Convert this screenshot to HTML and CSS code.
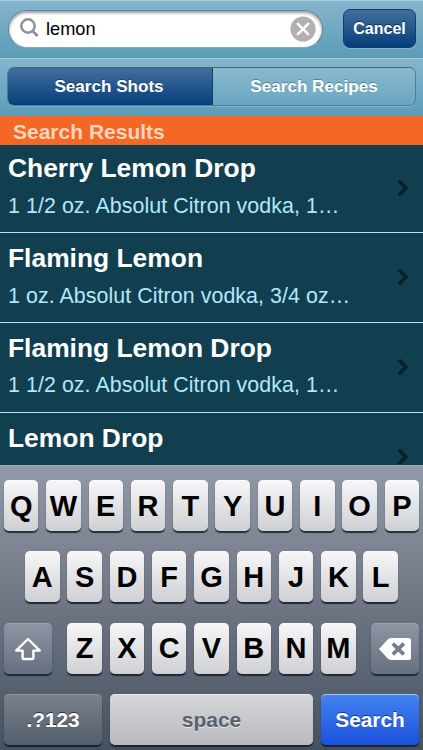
FILE: index.html
```html
<!DOCTYPE html>
<html lang="en">
<head>
    <meta charset="UTF-8">
    <title>Search Shots</title>
    <link rel="stylesheet" href="styles.css">
</head>
<body>
    <div class="search-bar">
        <div class="search-field">
            <svg class="magnifier" width="20" height="21" viewBox="0 0 20 21"><circle cx="8" cy="8" r="6.7" fill="none" stroke="#8d929b" stroke-width="2.5"/><path d="M12.6 13l5 5" stroke="#8d929b" stroke-width="3"/></svg>
            <span class="query">lemon</span>
            <svg class="clear" width="26" height="26" viewBox="0 0 26 26"><circle cx="13" cy="13" r="12.6" fill="#b1b1b1"/><path d="M7.8 7.8l10.4 10.4M18.2 7.8L7.8 18.2" stroke="#fff" stroke-width="2.5" stroke-linecap="round"/></svg>
        </div>
        <button class="cancel">Cancel</button>
    </div>

    <div class="scope-bar">
        <div class="segments">
            <button class="segment active">Search Shots</button>
            <button class="segment">Search Recipes</button>
        </div>
    </div>

    <h2 class="section-header">Search Results</h2>

    <div class="results">
        <div class="result">
            <div>
                <div class="name">Cherry Lemon Drop</div>
                <div class="ingredients">1 1/2 oz. Absolut Citron vodka, 1…</div>
            </div>
            <svg class="chevron" width="12" height="18" viewBox="0 0 12 18"><path d="M1.8 1.8L9 9l-7.2 7.2" fill="none" stroke="#07202b" stroke-width="3.6"/></svg>
        </div>
        <div class="result">
            <div>
                <div class="name">Flaming Lemon</div>
                <div class="ingredients">1 oz. Absolut Citron vodka, 3/4 oz…</div>
            </div>
            <svg class="chevron" width="12" height="18" viewBox="0 0 12 18"><path d="M1.8 1.8L9 9l-7.2 7.2" fill="none" stroke="#07202b" stroke-width="3.6"/></svg>
        </div>
        <div class="result">
            <div>
                <div class="name">Flaming Lemon Drop</div>
                <div class="ingredients">1 1/2 oz. Absolut Citron vodka, 1…</div>
            </div>
            <svg class="chevron" width="12" height="18" viewBox="0 0 12 18"><path d="M1.8 1.8L9 9l-7.2 7.2" fill="none" stroke="#07202b" stroke-width="3.6"/></svg>
        </div>
        <div class="result">
            <div>
                <div class="name">Lemon Drop</div>
            </div>
            <svg class="chevron" width="12" height="18" viewBox="0 0 12 18"><path d="M1.8 1.8L9 9l-7.2 7.2" fill="none" stroke="#07202b" stroke-width="3.6"/></svg>
        </div>
    </div>

    <div class="keyboard">
        <div class="keys">
            <div class="key">Q</div><div class="key">W</div><div class="key">E</div><div class="key">R</div><div class="key">T</div><div class="key">Y</div><div class="key">U</div><div class="key">I</div><div class="key">O</div><div class="key">P</div>
        </div>
        <div class="keys">
            <div class="key">A</div><div class="key">S</div><div class="key">D</div><div class="key">F</div><div class="key">G</div><div class="key">H</div><div class="key">J</div><div class="key">K</div><div class="key">L</div>
        </div>
        <div class="keys spread">
            <div class="key dark side">
                <svg width="28" height="24" viewBox="0 0 28 24"><path d="M14 2L2.2 13.6H8.6V20.5Q8.6 22 10 22H18Q19.4 22 19.4 20.5V13.6H25.8Z" fill="none" stroke="#fff" stroke-width="2.4" stroke-linejoin="round"/></svg>
            </div>
            <div class="keys">
                <div class="key">Z</div><div class="key">X</div><div class="key">C</div><div class="key">V</div><div class="key">B</div><div class="key">N</div><div class="key">M</div>
            </div>
            <div class="key dark side">
                <svg width="32" height="22" viewBox="0 0 32 22"><path d="M0 11L8.5 1.7Q10 0 12 0H29.5Q32 0 32 2.5V19.5Q32 22 29.5 22H12Q10 22 8.5 20.3Z" fill="#fff"/><path d="M13.8 5.6l11 10.8M24.8 5.6L13.8 16.4" stroke="#747d8c" stroke-width="3.6"/></svg>
            </div>
        </div>
        <div class="keys">
            <div class="key dark wide">.?123</div>
            <div class="key space">space</div>
            <div class="key blue wide">Search</div>
        </div>
    </div>
</body>
</html>
```
FILE: styles.css
```css
* {
    box-sizing: border-box;
}
body {
    margin: 0;
    width: 423px;
    height: 750px;
    overflow: hidden;
    display: flex;
    flex-direction: column;
    background: #113f50;
    font-family: "Liberation Sans", Arial, sans-serif;
}
button {
    padding: 0;
    font-family: inherit;
    font-weight: bold;
    color: #fff;
}
.search-bar, .scope-bar {
    height: 58px;
    flex: none;
    display: flex;
    align-items: center;
    padding: 0 7px 2px 8px;
    background: linear-gradient(#85b6ce, #5c9bb7);
    border-top: 1px solid #a5cbdc;
}
.search-bar {
    justify-content: space-between;
}
.search-field {
    width: 315px;
    height: 38px;
    display: flex;
    align-items: center;
    padding: 0 6px 0 11px;
    background: #fff;
    border: 1px solid #5d8798;
    border-bottom-color: #83adbf;
    border-radius: 19px;
    box-shadow: inset 0 2px 3px rgba(0, 0, 0, 0.4);
}
.magnifier {
    margin-right: 6px;
}
.query {
    flex: 1;
    font-size: 18.2px;
    padding-top: 2px;
}
.cancel {
    width: 73px;
    height: 39px;
    font-size: 16px;
    border: 1px solid #123f69;
    border-radius: 7px;
    background: linear-gradient(#416f9e, #053f7b);
    box-shadow: 0 1px 0 rgba(255, 255, 255, 0.2);
    text-shadow: 0 -1px 0 rgba(0, 0, 0, 0.5);
}
.scope-bar {
    padding: 0 7px 2px;
}
.segments {
    display: flex;
    width: 409px;
    height: 39px;
    border: 1px solid #4a7d94;
    border-top-color: #3f687b;
    border-radius: 7px;
    overflow: hidden;
    box-shadow: 0 1px 0 rgba(255, 255, 255, 0.2);
}
.segment {
    flex: 1;
    border: 0;
    font-size: 17.1px;
    background: linear-gradient(#8bb9cd, #68a6c1);
    text-shadow: 0 -1px 0 rgba(0, 0, 0, 0.3);
}
.segment.active {
    flex: 0 0 205px;
    padding-right: 2px;
    background: linear-gradient(#416f9e, #053f7b);
    border-right: 1px solid #123f69;
}
.section-header {
    flex: none;
    height: 29px;
    margin: 0;
    padding-left: 13px;
    background: #f56724;
    color: #ffd6bd;
    font-size: 21px;
    line-height: 32px;
}
.results {
    height: 320px;
    flex: none;
    overflow: hidden;
}
.result {
    height: 89.8px;
    display: flex;
    justify-content: space-between;
    padding: 0 14px 0 8px;
    margin-top: -1.8px;
    margin-bottom: 1.8px;
    border-bottom: 1px solid #c3dce5;
    white-space: nowrap;
}
.name {
    padding-top: 9px;
    font-size: 26.4px;
    line-height: 32px;
    font-weight: bold;
    color: #fff;
}
.ingredients {
    margin-top: 9.7px;
    font-size: 21.4px;
    line-height: 24px;
    letter-spacing: 0.06px;
    color: #b2e7fc;
}
.chevron {
    margin-top: 35.4px;
}
.keyboard {
    flex: 1;
    display: flex;
    flex-direction: column;
    gap: 20.4px;
    padding: 14px 4px 0;
    background: linear-gradient(#9299a6, #6d7583 50%, #465160);
    border-top: 1px solid #a8adb7;
}
.keys {
    display: flex;
    justify-content: center;
    gap: 7.8px;
}
.spread {
    justify-content: space-between;
}
.key {
    width: 34.5px;
    height: 51px;
    flex: none;
    display: flex;
    align-items: center;
    justify-content: center;
    padding-top: 1px;
    border-radius: 5px;
    background: linear-gradient(#f7f7f8, #cfd0d4);
    box-shadow: 0 2px 1px rgba(18, 24, 32, 0.8), inset 0 1px 0 rgba(255, 255, 255, 0.5);
    font-size: 29px;
    font-weight: bold;
    color: #000;
}
.dark {
    background: linear-gradient(#8e95a3, #677080);
    box-shadow: 0 2px 1px rgba(18, 24, 32, 0.8), inset 0 1px 0 rgba(255, 255, 255, 0.15);
    color: #fff;
    text-shadow: 0 -1px 0 rgba(0, 0, 0, 0.6);
}
.side {
    width: 48px;
}
.wide {
    width: 98px;
    font-size: 20.8px;
}
.dark.wide {
    background: linear-gradient(#7b828e, #535d6b);
}
.space {
    flex: 1;
    font-size: 21px;
    background: linear-gradient(#d5d6d8, #b9babd);
    color: #596170;
    text-shadow: 0 1px 0 rgba(255, 255, 255, 0.6);
}
.blue {
    background: linear-gradient(#4284f0, #1b50dc);
    color: #fff;
    text-shadow: 0 -1px 0 rgba(0, 0, 0, 0.5);
}
```
